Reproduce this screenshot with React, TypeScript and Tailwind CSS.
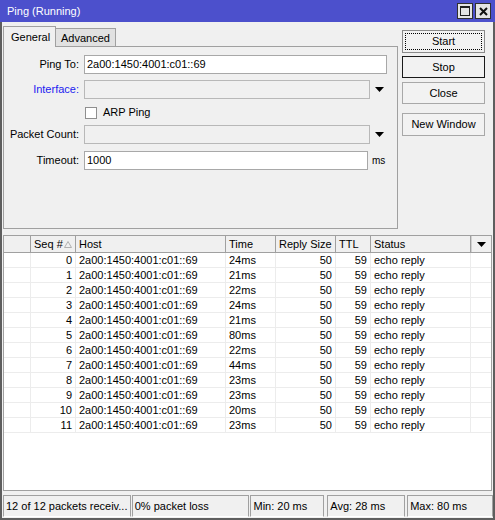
import React from "react";

const rows = [
  [0, "24ms"],
  [1, "21ms"],
  [2, "22ms"],
  [3, "24ms"],
  [4, "21ms"],
  [5, "80ms"],
  [6, "22ms"],
  [7, "44ms"],
  [8, "23ms"],
  [9, "23ms"],
  [10, "20ms"],
  [11, "23ms"],
] as const;

function DownArrow() {
  return (
    <svg width="9" height="5" viewBox="0 0 9 5" className="block">
      <polygon points="0,0 9,0 4.5,5" fill="#000" />
    </svg>
  );
}

export default function App() {
  return (
    <div
      className="w-[495px] h-[520px] flex flex-col bg-[#f0f0f0] text-[11px] text-black leading-none select-none"
      style={{ fontFamily: '"Liberation Sans", Arial, sans-serif' }}
    >
      {/* Title bar */}
      <div className="h-[22px] shrink-0 bg-[#4c50cc] flex items-center justify-between pl-[7px] pr-[4px]">
        <span className="text-white text-[11px]">Ping (Running)</span>
        <div className="flex gap-[2px] items-center">
          <div className="w-[16px] h-[16px] bg-[#e4e4e4] border border-[#303030] flex items-center justify-center">
            <div className="w-[10px] h-[10px] border border-[#202020] border-t-2" />
          </div>
          <div className="w-[16px] h-[16px] bg-[#e4e4e4] border border-[#303030] flex items-center justify-center">
            <svg width="9" height="9" viewBox="0 0 9 9">
              <path d="M1 1 L8 8 M8 1 L1 8" stroke="#111" strokeWidth="2" />
            </svg>
          </div>
        </div>
      </div>

      {/* Body */}
      <div className="flex-1 flex flex-col border-x-2 border-b-2 border-[#5e5e5e]">
        {/* Top section */}
        <div className="flex shrink-0">
          <div className="w-[400px] flex flex-col">
            {/* Tabs */}
            <div className="h-[24px] flex items-end pl-[1px]">
              <div className="relative z-10 -mb-px h-[21px] w-[53px] border-l border-t border-r border-[#a0a0a0] bg-[#f0f0f0] pl-[7px] pt-[5px]">
                General
              </div>
              <div className="h-[18px] w-[60px] border-t border-r border-[#a0a0a0] bg-[#e1e1e1] pl-[5px] pt-[4px]">
                Advanced
              </div>
            </div>
            {/* Panel */}
            <div className="ml-[1px] w-[395px] h-[183px] border border-[#a0a0a0] flex flex-col pt-[8px]">
              <div className="flex items-center h-[19px]">
                <div className="w-[75px] text-right">Ping To:</div>
                <div className="ml-[5px] w-[303px] h-[19px] bg-white border border-[#a8a8a8] flex items-center pl-[2px]">
                  2a00:1450:4001:c01::69
                </div>
              </div>
              <div className="flex items-center h-[19px] mt-[6px]">
                <div className="w-[75px] text-right text-[#1c1cf0]">Interface:</div>
                <div className="ml-[5px] w-[286px] h-[19px] bg-[#f0f0f0] border border-[#b8b8b8]" />
                <div className="ml-[5px]">
                  <DownArrow />
                </div>
              </div>
              <div className="flex items-center h-[19px] mt-[4px]">
                <div className="ml-[81px] w-[12px] h-[12px] bg-white border border-[#8f8f8f]" />
                <div className="ml-[6px]">ARP Ping</div>
              </div>
              <div className="flex items-center h-[19px] mt-[3px]">
                <div className="w-[75px] text-right">Packet Count:</div>
                <div className="ml-[5px] w-[286px] h-[19px] bg-[#f0f0f0] border border-[#b8b8b8]" />
                <div className="ml-[5px]">
                  <DownArrow />
                </div>
              </div>
              <div className="flex items-center h-[19px] mt-[7px]">
                <div className="w-[75px] text-right">Timeout:</div>
                <div className="ml-[5px] w-[284px] h-[19px] bg-white border border-[#a8a8a8] flex items-center pl-[2px]">
                  1000
                </div>
                <div className="ml-[4px] text-[10px]">ms</div>
              </div>
            </div>
          </div>
          {/* Buttons */}
          <div className="w-[83px] flex flex-col pt-[8px]">
            <div className="h-[23px] border border-[#8a8a8a] bg-[#f2f2f2] p-[2px]">
              <div className="h-full border border-dotted border-black flex items-center justify-center">
                Start
              </div>
            </div>
            <div className="h-[22px] mt-[3px] border border-[#1a1a1a] bg-[#f2f2f2] flex items-center justify-center">
              Stop
            </div>
            <div className="h-[22px] mt-[4px] border border-[#a8a8a8] bg-[#f2f2f2] flex items-center justify-center">
              Close
            </div>
            <div className="h-[23px] mt-[9px] border border-[#a8a8a8] bg-[#f2f2f2] flex items-center justify-center">
              New Window
            </div>
          </div>
        </div>

        {/* Table */}
        <div className="ml-[1px] mt-[6px] w-[489px] h-[256px] border border-[#a0a0a0] bg-white flex flex-col shrink-0">
          <div className="h-[17px] flex bg-[#f0f0f0] border-b border-[#a0a0a0]">
            <div className="w-[27px] border-r border-[#a0a0a0]" />
            <div className="w-[45px] border-r border-[#a0a0a0] flex items-center justify-between pl-[3px] pr-[3px]">
              <span>Seq #</span>
              <svg width="8" height="7" viewBox="0 0 8 7">
                <polygon points="4,0.5 7.5,6.5 0.5,6.5" fill="none" stroke="#b0b0b0" strokeWidth="1" />
              </svg>
            </div>
            <div className="w-[150px] border-r border-[#a0a0a0] flex items-center pl-[3px]">Host</div>
            <div className="w-[50px] border-r border-[#a0a0a0] flex items-center pl-[3px]">Time</div>
            <div className="w-[60px] border-r border-[#a0a0a0] flex items-center pl-[3px]">Reply Size</div>
            <div className="w-[35px] border-r border-[#a0a0a0] flex items-center pl-[3px]">TTL</div>
            <div className="w-[100px] border-r border-[#a0a0a0] flex items-center pl-[3px]">Status</div>
            <div className="flex-1 flex items-center justify-center border-l border-[#d0d0d0]">
              <DownArrow />
            </div>
          </div>
          {rows.map(([seq, t]) => (
            <div key={seq} className="h-[15px] flex border-b border-[#ececec]">
              <div className="w-[27px] border-r border-[#ececec]" />
              <div className="w-[45px] border-r border-[#ececec] flex items-center justify-end pr-[3px]">{seq}</div>
              <div className="w-[150px] border-r border-[#ececec] flex items-center pl-[3px]">2a00:1450:4001:c01::69</div>
              <div className="w-[50px] border-r border-[#ececec] flex items-center pl-[3px]">{t}</div>
              <div className="w-[60px] border-r border-[#ececec] flex items-center justify-end pr-[3px]">50</div>
              <div className="w-[35px] border-r border-[#ececec] flex items-center justify-end pr-[3px]">59</div>
              <div className="w-[100px] border-r border-[#ececec] flex items-center pl-[3px]">echo reply</div>
              <div className="flex-1" />
            </div>
          ))}
        </div>

        {/* Status bar */}
        <div className="flex-1 flex items-end pb-[1px] pl-[1px]">
          <div className="h-[22px] w-[128px] border border-t-[#a0a0a0] border-l-[#a0a0a0] border-r-[#a0a0a0] border-b-white flex items-center pl-[2px] whitespace-nowrap overflow-hidden">
            12 of 12 packets receiv...
          </div>
          <div className="h-[22px] w-[118px] ml-[1px] border border-t-[#a0a0a0] border-l-[#a0a0a0] border-r-[#a0a0a0] border-b-white flex items-center pl-[2px]">
            0% packet loss
          </div>
          <div className="h-[22px] w-[74px] ml-[1px] border border-t-[#a0a0a0] border-l-[#a0a0a0] border-r-[#a0a0a0] border-b-white flex items-center pl-[2px]">
            Min: 20 ms
          </div>
          <div className="h-[22px] w-[78px] ml-[3px] border border-t-[#a0a0a0] border-l-[#a0a0a0] border-r-[#a0a0a0] border-b-white flex items-center pl-[2px]">
            Avg: 28 ms
          </div>
          <div className="h-[22px] w-[86px] ml-[2px] border border-t-[#a0a0a0] border-l-[#a0a0a0] border-r-[#a0a0a0] border-b-white flex items-center pl-[2px]">
            Max: 80 ms
          </div>
        </div>
      </div>
    </div>
  );
}
